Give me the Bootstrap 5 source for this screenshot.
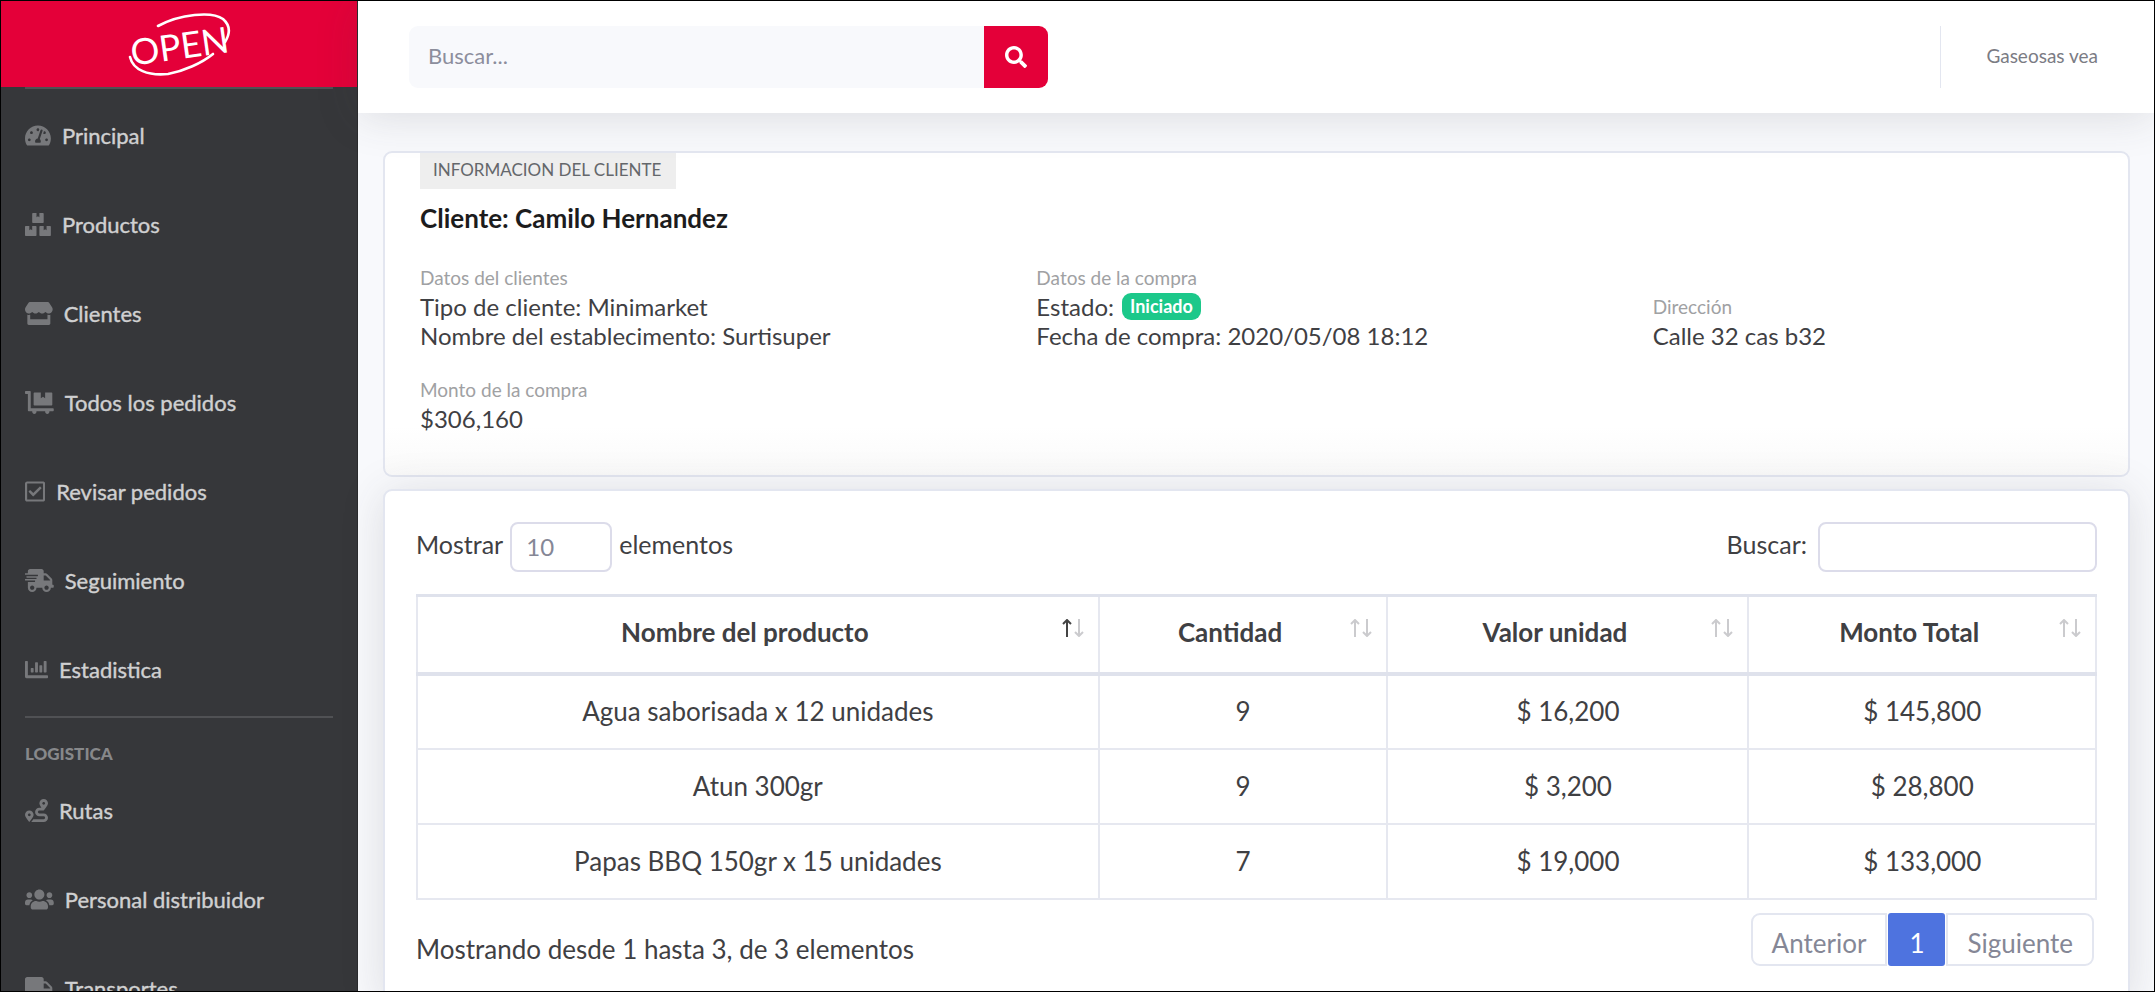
<!DOCTYPE html>
<html lang="es">
<head>
<meta charset="utf-8">
<meta name="viewport" content="width=device-width, initial-scale=1">
<title>Información del cliente</title>
<link href="https://cdn.jsdelivr.net/npm/bootstrap@5.3.0/dist/css/bootstrap.min.css" rel="stylesheet">
<style>
  :root { --brand: #e40039; --side: #36373a; --line: #e3e6f0; --ink: #3f4043; --muted: #858796; }
  body { font-family: Lato, "Open Sans", sans-serif; font-size: 26px; line-height: 39px; color: var(--ink); background: #f8f9fc; }
  .shell { height: 100vh; overflow: hidden; border: 1px solid #000; }

  /* Sidebar */
  .sidebar { width: 357px; background: var(--side); border-right: 1px solid #2a2b2d; }
  .brand { height: 86px; background: var(--brand); }
  .brand text { font: 36px Lato, sans-serif; fill: #fff; }
  .side-rule { margin: 0 24px; border-top: 2px solid #505154; opacity: 1; }
  .side-nav { padding-top: 2px; }
  .side-nav .side-rule { margin-top: 2px; }
  .side-link { height: 89px; padding: 0 24px; gap: 11px; font-size: 22px; line-height: 30px; color: #d0d0d1; text-decoration: none; -webkit-text-stroke: .4px #d0d0d1; white-space: nowrap; }
  .side-link:hover { color: #fff; }
  .side-link svg { height: 23px; fill: #77787b; flex: none; }
  .side-heading { padding: 24px 24px 0; font-size: 17px; line-height: 24px; font-weight: 900; color: #87888a; }

  /* Topbar */
  .topbar { height: 112px; padding: 0 51px; box-shadow: 0 4px 44px rgba(58, 59, 69, .15); z-index: 1; }
  .search { width: 639px; height: 62px; }
  .search .form-control { background: #f8f9fc; border: 0; border-radius: 9px; font-size: 22px; padding: 0 19px 4px; color: var(--muted); }
  .search .form-control::placeholder { color: #8c8e9c; }
  .search .btn { width: 64px; background: var(--brand); border: 0; border-radius: 9px; }
  .search .btn svg { height: 22px; fill: #fff; }
  .user { height: 62px; border-left: 1px solid var(--line); padding: 0 5px 4px 45px; font-size: 19px; color: #7b7c84; text-decoration: none; }

  /* Cards */
  .content-area { padding: 38px 24px 0 25px; gap: 12px; }
  .panel { border: 2px solid var(--line); border-radius: 9px; }
  .panel-lift { box-shadow: 0 4px 44px rgba(58, 59, 69, .15); }
  .client { height: 326px; padding: 0 35px; background: linear-gradient(#fff 85%, #fafafa); }
  .client-tag { height: 36px; padding: 0 15px 0 13px; background: #eee; font-size: 17px; line-height: 33px; color: #64676b; }
  .client-name { margin: 9px 0 0; font-size: 26px; line-height: 34px; font-weight: 700; color: #1c1c1d; }
  .facts { display: grid; grid-template-columns: 7fr 7fr 5fr; align-items: end; row-gap: 26px; margin-top: 29px; font-size: 24px; line-height: 29px; }
  .facts dt { font-size: 19px; line-height: 28px; font-weight: 400; color: #a0a1a3; }
  .facts dd { margin: 0; }
  .state { background: #1cc88a; font-size: 18px; line-height: 19px; padding: 4px 8px; border-radius: 9px; }

  /* Table */
  .orders { padding: 31px; }
  .orders label { gap: 7px; font-size: 25px; line-height: 45px; }
  .orders .filter { gap: 11px; }
  .orders .form-control, .orders .form-select { height: 50px; border: 2px solid #dcdcea; border-radius: 8px; font-size: 24px; line-height: 30px; color: var(--muted); }
  .orders .form-select { width: 102px; padding: 0 14px; background-image: none; }
  .orders .form-control { width: 279px; }
  .grid-table { margin: 22px 0 0; color: var(--ink); text-align: center; table-layout: fixed; --bs-table-bg: transparent; }
  .grid-table > :not(caption) > * > * { height: 75px; padding: 0 16px; border: 2px solid #e6e8f0; vertical-align: middle; color: var(--ink); }
  .grid-table > thead > tr > th { height: 78px; padding: 0 14px 3px 10px; border-top: 3px solid #dfe2ec; border-bottom: 4px solid #dfe2ec; }
  .grid-table svg { width: 22px; height: 18px; fill: none; stroke: #cbcbce; stroke-width: 2; margin-top: -10px; }
  .grid-table .on { stroke: #444; }
  .pager { margin: 13px 3px 0 0; gap: 2px; }
  .pager .page-link { height: 53px; padding: 5px 19px 0; line-height: 47px; font-size: 26px; border: 2px solid var(--line); color: var(--muted); margin: 0; }
  .pager .page-item:first-child .page-link { border-radius: 9px 0 0 9px; }
  .pager .page-item:last-child .page-link { border-radius: 0 9px 9px 0; }
  .pager .active .page-link { background: #4e73df; border-color: #4e73df; color: #fff; border-radius: 3px; }
  .summary { margin-top: 30px; }
</style>
</head>
<body>
<div class="shell d-flex">
  <aside class="sidebar flex-shrink-0">
    <a href="#" class="brand d-flex justify-content-center" aria-label="OPEN">
      <svg width="110" height="80" viewBox="124 0 110 80" fill="none" stroke="#fff" stroke-width="2.6" stroke-linecap="round">
        <path d="M158 25C180 13 212 10 223 18C231 25 230 33 225 41"/>
        <path d="M130 56C133 69 148 75 168 73C184 70 202 62 213 53"/>
        <text x="130" y="58" stroke="none" transform="rotate(-8 180 44)">OPEN</text>
      </svg>
    </a>
    <hr class="side-rule">
    <nav class="side-nav">
      <a class="side-link d-flex align-items-center" href="#"><svg viewBox="0 0 576 512"><path d="M288 32C128.94 32 0 160.94 0 320c0 52.8 14.25 102.26 39.06 144.8 5.61 9.62 16.3 15.2 27.44 15.2h443c11.14 0 21.83-5.58 27.44-15.2C561.75 422.26 576 372.8 576 320c0-159.06-128.94-288-288-288zm0 64c14.71 0 26.58 10.13 30.32 23.65-1.11 2.26-2.64 4.23-3.45 6.67l-9.22 27.67c-5.13 3.49-10.97 6.01-17.64 6.01-17.67 0-32-14.33-32-32S270.33 96 288 96zM96 384c-17.67 0-32-14.33-32-32s14.33-32 32-32 32 14.33 32 32-14.33 32-32 32zm48-160c-17.67 0-32-14.33-32-32s14.33-32 32-32 32 14.33 32 32-14.33 32-32 32zm246.77-72.41l-61.33 184C343.13 347.33 352 364.54 352 384c0 11.72-3.38 22.55-8.88 32H232.88c-5.5-9.45-8.88-20.28-8.88-32 0-33.94 26.5-61.43 59.9-63.59l61.34-184.01c4.17-12.56 17.73-19.45 30.36-15.17 12.57 4.19 19.35 17.79 15.17 30.36zm14.66 57.2l15.52-46.55c3.47-1.29 7.13-2.23 11.05-2.23 17.67 0 32 14.33 32 32s-14.33 32-32 32c-11.38-.01-20.89-6.28-26.57-15.22zM480 384c-17.67 0-32-14.33-32-32s14.33-32 32-32 32 14.33 32 32-14.33 32-32 32z"/></svg>Principal</a>
      <a class="side-link d-flex align-items-center" href="#"><svg viewBox="0 0 576 512"><path d="M560 288h-80v96l-32-21.3-32 21.3v-96h-80c-8.8 0-16 7.2-16 16v192c0 8.8 7.2 16 16 16h224c8.8 0 16-7.2 16-16V304c0-8.8-7.2-16-16-16zm-384-64h224c8.8 0 16-7.2 16-16V16c0-8.8-7.2-16-16-16h-80v96l-32-21.3L256 96V0h-80c-8.8 0-16 7.2-16 16v192c0 8.8 7.2 16 16 16zm64 64h-80v96l-32-21.3L96 384v-96H16c-8.8 0-16 7.2-16 16v192c0 8.8 7.2 16 16 16h224c8.8 0 16-7.2 16-16V304c0-8.8-7.2-16-16-16z"/></svg>Productos</a>
      <a class="side-link d-flex align-items-center" href="#"><svg viewBox="0 0 616 512"><path d="M602 118.6L537.1 15C531.3 5.7 521 0 510 0H106C95 0 84.7 5.7 78.9 15L14 118.6c-33.5 53.5-3.8 127.9 58.8 136.4 4.5.6 9.1.9 13.7.9 29.6 0 55.8-13 73.8-33.1 18 20.1 44.3 33.1 73.8 33.1 29.6 0 55.8-13 73.8-33.1 18 20.1 44.3 33.1 73.8 33.1 29.6 0 55.8-13 73.8-33.1 18.1 20.1 44.3 33.1 73.8 33.1 4.7 0 9.2-.3 13.7-.9 62.8-8.4 92.6-82.8 59-136.4zM529.5 288c-10 0-19.9-1.5-29.5-3.8V384H116v-99.8c-9.6 2.2-19.5 3.8-29.5 3.8-6 0-12.1-.4-18-1.2-5.6-.8-11.1-2.1-16.4-3.6V480c0 17.7 14.3 32 32 32h448c17.7 0 32-14.3 32-32V283.2c-5.4 1.6-10.8 2.9-16.4 3.6-6.1.8-12.1 1.2-18.2 1.2z"/></svg>Clientes</a>
      <a class="side-link d-flex align-items-center" href="#"><svg viewBox="0 0 640 512"><path d="M208 320h384c8.8 0 16-7.2 16-16V48c0-8.8-7.2-16-16-16H448v128l-48-32-48 32V32H208c-8.8 0-16 7.2-16 16v256c0 8.8 7.2 16 16 16zm416 64H128V16c0-8.8-7.2-16-16-16H16C7.2 0 0 7.2 0 16v32c0 8.8 7.2 16 16 16h48v368c0 8.8 7.2 16 16 16h82.9c-1.8 5-2.9 10.4-2.9 16 0 26.5 21.5 48 48 48s48-21.5 48-48c0-5.6-1.2-11-2.9-16H451c-1.8 5-2.9 10.4-2.9 16 0 26.5 21.5 48 48 48s48-21.5 48-48c0-5.6-1.2-11-2.9-16H624c8.8 0 16-7.2 16-16v-32c0-8.8-7.2-16-16-16z"/></svg>Todos los pedidos</a>
      <a class="side-link d-flex align-items-center" href="#"><svg viewBox="0 0 448 512"><path d="M400 32H48C21.49 32 0 53.49 0 80v352c0 26.51 21.49 48 48 48h352c26.51 0 48-21.49 48-48V80c0-26.51-21.49-48-48-48zm0 400H48V80h352v352zm-35.864-241.724L191.547 361.48c-4.705 4.667-12.303 4.637-16.97-.068l-90.781-91.516c-4.667-4.705-4.637-12.303.069-16.971l22.719-22.536c4.705-4.667 12.303-4.637 16.97.069l59.792 60.277 141.352-140.216c4.705-4.667 12.303-4.637 16.97.068l22.536 22.718c4.667 4.706 4.637 12.304-.068 16.971z"/></svg>Revisar pedidos</a>
      <a class="side-link d-flex align-items-center" href="#"><svg viewBox="0 0 640 512"><path fill-rule="evenodd" d="M624 352h-16V243.9c0-12.7-5.1-24.9-14.1-33.9L494 110.1c-9-9-21.2-14.1-33.9-14.1H416V48c0-26.5-21.5-48-48-48H112C85.5 0 64 21.5 64 48v48H8c-4.4 0-8 3.6-8 8v16c0 4.4 3.6 8 8 8h272c4.4 0 8 3.6 8 8v16c0 4.4-3.6 8-8 8H40c-4.4 0-8 3.6-8 8v16c0 4.4 3.6 8 8 8h208c4.4 0 8 3.6 8 8v16c0 4.4-3.6 8-8 8H8c-4.4 0-8 3.6-8 8v16c0 4.4 3.6 8 8 8h208c4.4 0 8 3.6 8 8v16c0 4.4-3.6 8-8 8H64v128c0 53 43 96 96 96s96-43 96-96h128c0 53 43 96 96 96s96-43 96-96h48c8.8 0 16-7.2 16-16v-32c0-8.8-7.2-16-16-16zM160 464c-26.5 0-48-21.5-48-48s21.5-48 48-48 48 21.5 48 48-21.5 48-48 48zm320 0c-26.5 0-48-21.5-48-48s21.5-48 48-48 48 21.5 48 48-21.5 48-48 48zm80-208H416V144h44.1l99.9 99.9V256z"/></svg>Seguimiento</a>
      <a class="side-link d-flex align-items-center" href="#"><svg viewBox="0 0 512 512"><path d="M332.8 320h38.4c6.4 0 12.8-6.4 12.8-12.8V172.8c0-6.4-6.4-12.8-12.8-12.8h-38.4c-6.4 0-12.8 6.4-12.8 12.8v134.4c0 6.4 6.4 12.8 12.8 12.8zm96 0h38.4c6.4 0 12.8-6.4 12.8-12.8V76.8c0-6.4-6.4-12.8-12.8-12.8h-38.4c-6.4 0-12.8 6.4-12.8 12.8v230.4c0 6.4 6.4 12.8 12.8 12.8zm-288 0h38.4c6.4 0 12.8-6.4 12.8-12.8v-70.4c0-6.4-6.4-12.8-12.8-12.8h-38.4c-6.4 0-12.8 6.4-12.8 12.8v70.4c0 6.4 6.4 12.8 12.8 12.8zm96 0h38.4c6.4 0 12.8-6.4 12.8-12.8V108.8c0-6.4-6.4-12.8-12.8-12.8h-38.4c-6.4 0-12.8 6.4-12.8 12.8v198.4c0 6.4 6.4 12.8 12.8 12.8zM496 384H64V80c0-8.84-7.16-16-16-16H16C7.16 64 0 71.16 0 80v336c0 17.67 14.33 32 32 32h464c8.84 0 16-7.16 16-16v-32c0-8.84-7.16-16-16-16z"/></svg>Estadistica</a>
      <hr class="side-rule">
      <div class="side-heading">LOGISTICA</div>
      <a class="side-link d-flex align-items-center" href="#"><svg viewBox="0 0 512 512"><path d="M416 320h-96c-17.6 0-32-14.4-32-32s14.4-32 32-32h96s96-107 96-160-43-96-96-96-96 43-96 96c0 25.5 22.2 63.4 45.3 96H320c-52.9 0-96 43.1-96 96s43.1 96 96 96h96c17.6 0 32 14.4 32 32s-14.4 32-32 32H185.5c-16 24.8-33.8 47.7-47.3 64H416c52.9 0 96-43.1 96-96s-43.1-96-96-96zm0-256c17.7 0 32 14.3 32 32s-14.3 32-32 32-32-14.3-32-32 14.3-32 32-32zM96 256c-53 0-96 43-96 96s96 160 96 160 96-107 96-160-43-96-96-96zm0 128c-17.7 0-32-14.3-32-32s14.3-32 32-32 32 14.3 32 32-14.3 32-32 32z"/></svg>Rutas</a>
      <a class="side-link d-flex align-items-center" href="#"><svg viewBox="0 0 640 512"><path d="M96 224c35.3 0 64-28.7 64-64s-28.7-64-64-64-64 28.7-64 64 28.7 64 64 64zm448 0c35.3 0 64-28.7 64-64s-28.7-64-64-64-64 28.7-64 64 28.7 64 64 64zm32 32h-64c-17.6 0-33.5 7.1-45.1 18.6 40.3 22.1 68.9 62 75.1 109.4h66c17.7 0 32-14.3 32-32v-32c0-35.3-28.7-64-64-64zm-256 0c61.9 0 112-50.1 112-112S381.9 32 320 32 208 82.1 208 144s50.1 112 112 112zm76.8 32h-8.3c-20.8 10-43.9 16-68.5 16s-47.6-6-68.5-16h-8.3C179.6 288 128 339.6 128 403.2V432c0 26.5 21.5 48 48 48h288c26.5 0 48-21.5 48-48v-28.8c0-63.6-51.6-115.2-115.2-115.2zm-223.7-13.4C161.5 263.1 145.6 256 128 256H64c-35.3 0-64 28.7-64 64v32c0 17.7 14.3 32 32 32h65.9c6.3-47.4 34.9-87.3 75.2-109.4z"/></svg>Personal distribuidor</a>
      <a class="side-link d-flex align-items-center" href="#"><svg viewBox="0 0 640 512"><path d="M624 352h-16V243.9c0-12.7-5.1-24.9-14.1-33.9L494 110.1c-9-9-21.2-14.1-33.9-14.1H416V48c0-26.5-21.5-48-48-48H48C21.5 0 0 21.5 0 48v320c0 26.5 21.5 48 48 48h16c0 53 43 96 96 96s96-43 96-96h128c0 53 43 96 96 96s96-43 96-96h48c8.8 0 16-7.2 16-16v-32c0-8.8-7.2-16-16-16zM160 464c-26.5 0-48-21.5-48-48s21.5-48 48-48 48 21.5 48 48-21.5 48-48 48zm320 0c-26.5 0-48-21.5-48-48s21.5-48 48-48 48 21.5 48 48-21.5 48-48 48zm80-208H416V144h44.1l99.9 99.9V256z"/></svg>Transportes</a>
    </nav>
  </aside>

  <div class="flex-grow-1 d-flex flex-column">
    <header class="topbar bg-white d-flex align-items-center justify-content-between flex-shrink-0 position-relative">
      <form class="search input-group" role="search">
        <input type="search" class="form-control shadow-none" placeholder="Buscar..." aria-label="Buscar">
        <button type="button" class="btn d-flex align-items-center justify-content-center" aria-label="Buscar"><svg viewBox="0 0 512 512"><path d="M505 442.7L405.3 343c-4.5-4.5-10.6-7-17-7H372c27.6-35.3 44-79.7 44-128C416 93.1 322.9 0 208 0S0 93.1 0 208s93.1 208 208 208c48.3 0 92.7-16.4 128-44v16.3c0 6.4 2.5 12.5 7 17l99.7 99.7c9.4 9.4 24.6 9.4 33.9 0l28.3-28.3c9.4-9.4 9.4-24.6.1-34zM208 336c-70.7 0-128-57.2-128-128 0-70.7 57.2-128 128-128 70.7 0 128 57.2 128 128 0 70.7-57.2 128-128 128z"/></svg></button>
      </form>
      <a href="#" class="user d-flex align-items-center">Gaseosas vea</a>
    </header>

    <main class="content-area d-flex flex-column">
      <section class="panel client flex-shrink-0">
        <span class="client-tag d-inline-block align-top">INFORMACION DEL CLIENTE</span>
        <h1 class="client-name">Cliente: Camilo Hernandez</h1>
        <div class="facts">
          <dl class="m-0"><dt>Datos del clientes</dt><dd>Tipo de cliente: Minimarket</dd><dd>Nombre del establecimento: Surtisuper</dd></dl>
          <dl class="m-0"><dt>Datos de la compra</dt><dd class="d-flex align-items-center gap-2">Estado: <span class="badge state">Iniciado</span></dd><dd>Fecha de compra: 2020/05/08 18:12</dd></dl>
          <dl class="m-0"><dt>Dirección</dt><dd>Calle 32 cas b32</dd></dl>
          <dl class="m-0"><dt>Monto de la compra</dt><dd>$306,160</dd></dl>
        </div>
      </section>

      <section class="panel panel-lift orders bg-white">
        <div class="d-flex justify-content-between align-items-start">
          <label class="d-flex align-items-start">Mostrar
            <select class="form-select shadow-none"><option>10</option><option>25</option></select> elementos</label>
          <label class="filter d-flex align-items-start">Buscar: <input type="search" class="form-control shadow-none"></label>
        </div>
        <table class="table grid-table">
          <colgroup><col style="width:40.6%"><col style="width:17.2%"><col style="width:21.5%"><col style="width:20.7%"></colgroup>
          <thead><tr>
            <th scope="col"><div class="d-flex align-items-center"><span class="flex-grow-1">Nombre del producto</span><svg viewBox="0 0 22 18"><path class="on" d="M5 18V2M1 5l4-4 4 4"/><path d="M17 0v16M13 13l4 4 4-4"/></svg></div></th>
            <th scope="col"><div class="d-flex align-items-center"><span class="flex-grow-1">Cantidad</span><svg viewBox="0 0 22 18"><path d="M5 18V2M1 5l4-4 4 4M17 0v16M13 13l4 4 4-4"/></svg></div></th>
            <th scope="col"><div class="d-flex align-items-center"><span class="flex-grow-1">Valor unidad</span><svg viewBox="0 0 22 18"><path d="M5 18V2M1 5l4-4 4 4M17 0v16M13 13l4 4 4-4"/></svg></div></th>
            <th scope="col"><div class="d-flex align-items-center"><span class="flex-grow-1">Monto Total</span><svg viewBox="0 0 22 18"><path d="M5 18V2M1 5l4-4 4 4M17 0v16M13 13l4 4 4-4"/></svg></div></th>
          </tr></thead>
          <tbody>
            <tr><td>Agua saborisada x 12 unidades</td><td>9</td><td>$ 16,200</td><td>$ 145,800</td></tr>
            <tr><td>Atun 300gr</td><td>9</td><td>$ 3,200</td><td>$ 28,800</td></tr>
            <tr><td>Papas BBQ 150gr x 15 unidades</td><td>7</td><td>$ 19,000</td><td>$ 133,000</td></tr>
          </tbody>
        </table>
        <div class="d-flex justify-content-between">
          <div class="summary">Mostrando desde 1 hasta 3, de 3 elementos</div>
          <ul class="pagination pager">
            <li class="page-item"><a class="page-link" href="#">Anterior</a></li>
            <li class="page-item active"><a class="page-link" href="#">1</a></li>
            <li class="page-item"><a class="page-link" href="#">Siguiente</a></li>
          </ul>
        </div>
      </section>
    </main>
  </div>
</div>
<script src="https://cdn.jsdelivr.net/npm/bootstrap@5.3.0/dist/js/bootstrap.bundle.min.js"></script>
</body>
</html>
